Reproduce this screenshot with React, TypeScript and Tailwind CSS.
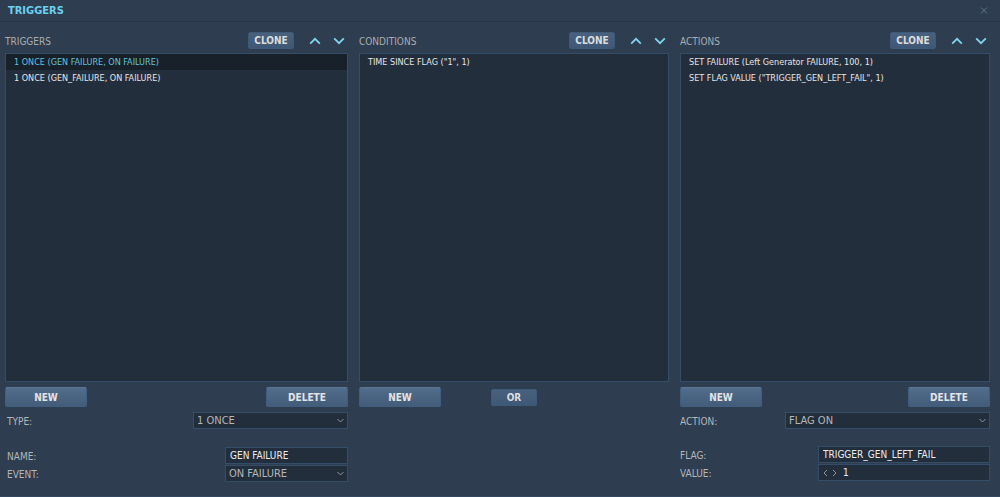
import type { ReactNode } from "react";

type ButtonProps = { children: ReactNode };

function SmallButton({ children }: ButtonProps) {
  return (
    <button
      type="button"
      className="flex h-[17px] w-[46px] items-center justify-center rounded-[2px] border border-[#3d5a78] bg-linear-to-b from-[#49617d] to-[#3e5877] pt-px text-[10px] leading-[14px] font-bold text-[#dcdcdc]"
    >
      {children}
    </button>
  );
}

function WideButton({ children }: ButtonProps) {
  return (
    <button
      type="button"
      className="flex h-5 w-[82px] items-center justify-center rounded-[2px] border border-t-[#5a7693] border-r-[#3f5f80] border-b-[#3f5f80] border-l-[#3f5f80] bg-linear-to-b from-[#526d8b] to-[#425c7a] pt-0.5 text-[10px] leading-[14px] font-bold text-[#e4e4e4]"
    >
      {children}
    </button>
  );
}

function ArrowButton({ label, path }: { label: string; path: string }) {
  return (
    <button type="button" aria-label={label} className="flex h-[17px] w-3.5 items-center justify-center">
      <svg width="12" height="8" viewBox="0 0 12 8" fill="none" stroke="#7fd6ec" strokeWidth="1.8">
        <path d={path} />
      </svg>
    </button>
  );
}

function PanelHeader({ title }: { title: string }) {
  return (
    <div className="mb-1 flex h-[17px] items-center pr-0.5">
      <h2 className="flex-1 pt-0.5 text-[10px] leading-4 text-[#a9adb1]">{title}</h2>
      <SmallButton>CLONE</SmallButton>
      <div className="ml-3.5 flex gap-2.5">
        <ArrowButton label={`Move ${title.toLowerCase()} up`} path="M1.2 6.6 6 1.8l4.8 4.8" />
        <ArrowButton label={`Move ${title.toLowerCase()} down`} path="M1.2 1.4 6 6.2l4.8-4.8" />
      </div>
    </div>
  );
}

function ItemList({ items, selected }: { items: string[]; selected?: number }) {
  return (
    <ul className="h-[329px] overflow-hidden border border-[#344d68] bg-[#232e3c]">
      {items.map((item, i) => (
        <li key={item}>
          <button
            type="button"
            className={
              i === selected
                ? "block h-4 w-full bg-[#18212a] px-2 text-left text-[9px] leading-4 whitespace-nowrap text-[#62c3dc]"
                : "block h-4 w-full px-2 text-left text-[9px] leading-4 whitespace-nowrap text-[#e6e6e6]"
            }
          >
            {item}
          </button>
        </li>
      ))}
    </ul>
  );
}

function Field({ id, label, children }: { id: string; label: string; children: ReactNode }) {
  return (
    <div className="flex h-[17px] items-center justify-between">
      <label htmlFor={id} className="pt-0.5 text-[10px] leading-4 text-[#b4b7ba]">
        {label}
      </label>
      {children}
    </div>
  );
}

function Select({ id, value, width }: { id: string; value: string; width: string }) {
  return (
    <div className={`relative h-[17px] ${width}`}>
      <select
        id={id}
        defaultValue={value}
        className="block h-full w-full appearance-none border border-[#344d68] bg-[#232e3c] pl-[3px] text-[11px] leading-none text-[#b4b7ba]"
      >
        <option>{value}</option>
      </select>
      <svg
        className="pointer-events-none absolute top-1.5 right-1"
        width="7"
        height="5"
        viewBox="0 0 7 5"
        fill="none"
        stroke="#8b959f"
      >
        <path d="M.5 1 3.5 4l3-3" />
      </svg>
    </div>
  );
}

function TextField({ id, value, width }: { id: string; value: string; width: string }) {
  return (
    <input
      id={id}
      type="text"
      defaultValue={value}
      className={`h-[17px] border border-[#344d68] bg-[#232e3c] px-1 text-[10px] leading-[17px] text-[#ececec] ${width}`}
    />
  );
}

export default function App() {
  return (
    <div className="flex min-h-screen flex-col border-b border-[#34485f] bg-[#2e3d4f] font-['DejaVu_Sans_Condensed','DejaVu_Sans',sans-serif]">
      <header className="flex h-[22px] items-center justify-between border-b border-[#25364a] pr-3 pl-2">
        <h1 className="text-[11px] leading-4 font-bold text-[#6bd0ee]">TRIGGERS</h1>
        <button type="button" aria-label="Close" className="flex h-4 w-2 items-center justify-center">
          <svg width="8" height="8" viewBox="0 0 8 8" fill="none" stroke="#5f7890">
            <path d="M1 .5l6 6M7 .5l-6 6" />
          </svg>
        </button>
      </header>

      <main className="grid grid-cols-[343fr_310fr_310fr] gap-x-[11px] pt-2.5 pr-2.5 pl-[5px]">
        <section>
          <PanelHeader title="TRIGGERS" />
          <ItemList
            items={["1 ONCE (GEN FAILURE, ON FAILURE)", "1 ONCE (GEN_FAILURE, ON FAILURE)"]}
            selected={0}
          />
          <div className="mt-[5px] mb-[5px] flex justify-between">
            <WideButton>NEW</WideButton>
            <WideButton>DELETE</WideButton>
          </div>
          <div className="pl-0.5">
            <Field id="type" label="TYPE:">
              <Select id="type" value="1 ONCE" width="w-[155px]" />
            </Field>
            <div className="mt-[18px] flex flex-col gap-px">
              <Field id="name" label="NAME:">
                <TextField id="name" value="GEN FAILURE" width="w-[123px]" />
              </Field>
              <Field id="event" label="EVENT:">
                <Select id="event" value="ON FAILURE" width="w-[123px]" />
              </Field>
            </div>
          </div>
        </section>

        <section>
          <PanelHeader title="CONDITIONS" />
          <ItemList items={['TIME SINCE FLAG ("1", 1)']} />
          <div className="mt-[5px] grid grid-cols-3 items-center">
            <WideButton>NEW</WideButton>
            <div className="justify-self-center">
              <SmallButton>OR</SmallButton>
            </div>
          </div>
        </section>

        <section>
          <PanelHeader title="ACTIONS" />
          <ItemList
            items={[
              "SET FAILURE (Left Generator FAILURE, 100, 1)",
              'SET FLAG VALUE ("TRIGGER_GEN_LEFT_FAIL", 1)',
            ]}
          />
          <div className="mt-[5px] mb-[5px] flex justify-between">
            <WideButton>NEW</WideButton>
            <WideButton>DELETE</WideButton>
          </div>
          <Field id="action" label="ACTION:">
            <Select id="action" value="FLAG ON" width="w-[205px]" />
          </Field>
          <div className="mt-[17px] flex flex-col gap-px">
            <Field id="flag" label="FLAG:">
              <TextField id="flag" value="TRIGGER_GEN_LEFT_FAIL" width="w-[172px]" />
            </Field>
            <Field id="value" label="VALUE:">
              <div className="flex h-[17px] w-[172px] items-center gap-1 border border-[#344d68] bg-[#232e3c] pl-1">
                <button type="button" aria-label="Decrease value">
                  <svg width="5" height="8" viewBox="0 0 5 8" fill="none" stroke="#8b959f">
                    <path d="M4 1 1 4l3 3" />
                  </svg>
                </button>
                <button type="button" aria-label="Increase value">
                  <svg width="5" height="8" viewBox="0 0 5 8" fill="none" stroke="#8b959f">
                    <path d="M1 1l3 3-3 3" />
                  </svg>
                </button>
                <input
                  id="value"
                  type="text"
                  defaultValue="1"
                  className="h-full min-w-0 flex-1 bg-transparent px-0.5 text-[10px] leading-[17px] text-[#ececec]"
                />
              </div>
            </Field>
          </div>
        </section>
      </main>
    </div>
  );
}
